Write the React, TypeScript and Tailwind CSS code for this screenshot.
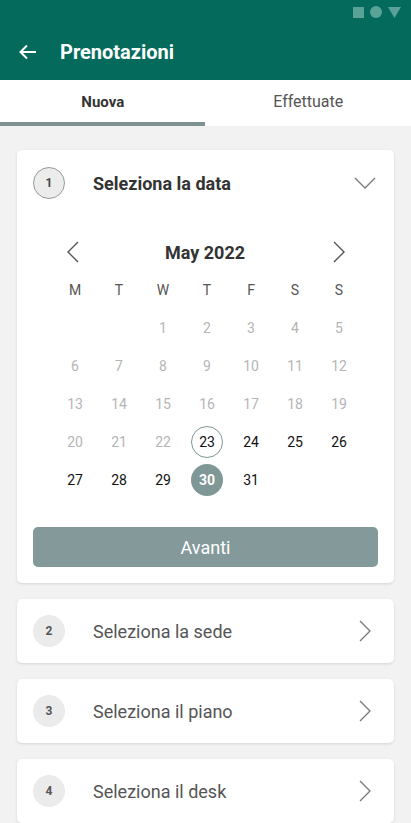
import React from "react";

const days: (number | null)[] = [null, null, 1, 2, 3, 4, 5, 6, 7, 8, 9, 10, 11, 12, 13, 14, 15, 16, 17, 18, 19, 20, 21, 22, 23, 24, 25, 26, 27, 28, 29, 30, 31];

function ChevronRight() {
  return (
    <svg width="14" height="24" viewBox="0 0 14 24" fill="none" stroke="#777" strokeWidth="1.3">
      <path d="M2 2 L12 12 L2 22" />
    </svg>
  );
}

function StepCard({ n, title }: { n: number; title: string }) {
  return (
    <div className="bg-white rounded-[5px] shadow-[0_1px_3px_rgba(0,0,0,0.12)] h-[64px] flex items-center pl-[16px] pr-[22px]">
      <div className="w-[32px] h-[32px] rounded-full bg-[#ebebeb] flex items-center justify-center text-[12px] font-bold text-[#555]">{n}</div>
      <div className="ml-[28px] flex-1 text-[18px] text-[#555]">{title}</div>
      <ChevronRight />
    </div>
  );
}

export default function App() {
  return (
    <div className="w-[411px] h-[823px] overflow-hidden bg-[#f2f2f2]" style={{ fontFamily: "Roboto, 'Noto Sans', sans-serif" }}>
      <div className="bg-[#046b5c]">
        <div className="h-[24px] flex items-center justify-end pr-[10px] gap-[6px]">
          <div className="w-[11px] h-[11px] bg-[#5aa297]" />
          <div className="w-[12px] h-[12px] rounded-full bg-[#5aa297]" />
          <svg width="13" height="11" viewBox="0 0 13 11"><path d="M0 0 H13 L6.5 11 Z" fill="#5aa297" /></svg>
        </div>
        <div className="h-[56px] flex items-center pl-[19px]">
          <svg width="18" height="16" viewBox="0 0 18 16" fill="none" stroke="white" strokeWidth="2">
            <path d="M17 8 H2 M8 1.5 L1.5 8 L8 14.5" />
          </svg>
          <div className="ml-[23px] text-white text-[20px] font-bold">Prenotazioni</div>
        </div>
      </div>
      <div className="bg-white h-[46px] flex relative">
        <div className="flex-1 flex items-center justify-center text-[15px] font-bold text-[#333] pb-[2px]">Nuova</div>
        <div className="flex-1 flex items-center justify-center text-[16px] text-[#555] pb-[2px]">Effettuate</div>
        <div className="absolute left-0 bottom-0 w-[205px] h-[4px] bg-[#7e9291]" />
      </div>
      <div className="px-[17px] pt-[24px] flex flex-col gap-[16px]">
        <div className="bg-white rounded-[5px] shadow-[0_1px_3px_rgba(0,0,0,0.12)] pb-[16px]">
          <div className="h-[66px] flex items-center pl-[16px] pr-[18px]">
            <div className="w-[32px] h-[32px] rounded-full bg-[#ececec] border border-[#9a9a9a] flex items-center justify-center text-[12px] font-bold text-[#444]">1</div>
            <div className="ml-[28px] flex-1 text-[18px] font-bold text-[#333]">Seleziona la data</div>
            <svg width="22" height="12" viewBox="0 0 22 12" fill="none" stroke="#777" strokeWidth="1.3">
              <path d="M1 1 L11 11 L21 1" />
            </svg>
          </div>
          <div className="ml-[36px] w-[308px] mt-[20px]">
            <div className="h-[32px] flex items-center justify-between">
              <div className="w-[40px] flex justify-center">
                <svg width="12" height="22" viewBox="0 0 12 22" fill="none" stroke="#555" strokeWidth="1.4">
                  <path d="M11 1 L1 11 L11 21" />
                </svg>
              </div>
              <div className="text-[18px] font-bold text-[#333]">May 2022</div>
              <div className="w-[44px] flex justify-center">
                <svg width="12" height="22" viewBox="0 0 12 22" fill="none" stroke="#555" strokeWidth="1.4">
                  <path d="M1 1 L11 11 L1 21" />
                </svg>
              </div>
            </div>
            <div className="grid grid-cols-7 mt-[3px]">
              {["M", "T", "W", "T", "F", "S", "S"].map((d, i) => (
                <div key={i} className="h-[38px] flex items-center justify-center text-[14px] text-[#555]">{d}</div>
              ))}
              {days.map((d, i) => {
                if (d === null) return <div key={i} className="h-[38px]" />;
                const disabled = d < 23;
                const today = d === 23;
                const selected = d === 30;
                return (
                  <div key={i} className="h-[38px] flex items-center justify-center">
                    <div
                      className={
                        "w-[32px] h-[32px] rounded-full flex items-center justify-center text-[14px] " +
                        (selected
                          ? "bg-[#7f9796] text-white font-bold"
                          : today
                          ? "border border-[#7f9796] text-[#111]"
                          : disabled
                          ? "text-[#b5b5b5]"
                          : "text-[#111]")
                      }
                    >
                      {d}
                    </div>
                  </div>
                );
              })}
            </div>
          </div>
          <div className="mx-[16px] mt-[28px] h-[40px] rounded-[5px] bg-[#84999a] flex items-center justify-center text-white text-[18px]">Avanti</div>
        </div>
        <StepCard n={2} title="Seleziona la sede" />
        <StepCard n={3} title="Seleziona il piano" />
        <StepCard n={4} title="Seleziona il desk" />
      </div>
    </div>
  );
}
